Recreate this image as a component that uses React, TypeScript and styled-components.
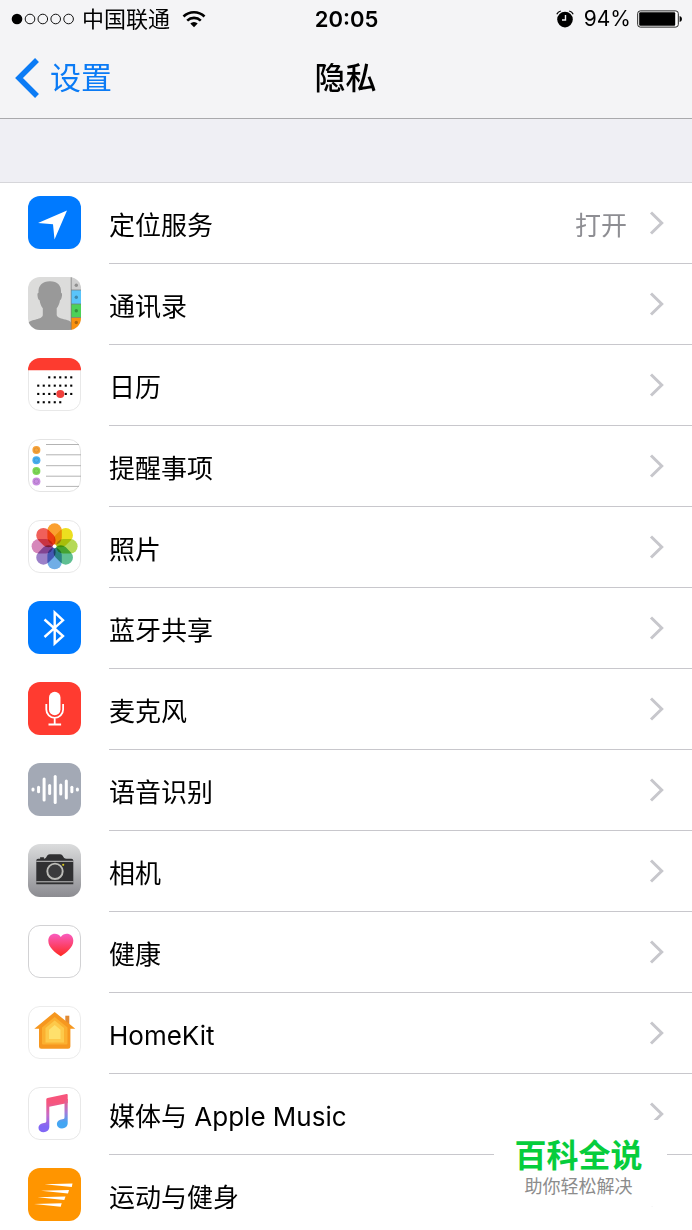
import React from 'react';
import styled, { createGlobalStyle } from 'styled-components';

const GlobalStyle = createGlobalStyle`
  * { box-sizing: border-box; }
  body {
    margin: 0;
    background: #fff;
    color: #000;
    font-family: Inter, "Noto Sans CJK SC", sans-serif;
  }
  a { color: inherit; text-decoration: none; }
  svg { display: block; flex: none; }
`;

const Screen = styled.div`
  position: relative;
  height: 100vh;
  overflow: hidden;
  display: flex;
  flex-direction: column;
`;

const Header = styled.header`
  flex: none;
  background: #f4f4f6;
  border-bottom: 1px solid #a9a9ac;
`;

const StatusBar = styled.div`
  display: grid;
  grid-template-columns: 1fr auto 1fr;
  align-items: center;
  height: 38px;
  padding: 0 10px 0 11px;
  font-size: 22px;
  line-height: 38px;
`;

const StatusGroup = styled.div<{ $end?: boolean }>`
  display: flex;
  align-items: center;
  justify-content: ${(p) => (p.$end ? 'flex-end' : 'flex-start')};
`;

const Carrier = styled.span`
  margin: 0 12px 0 7px;
`;

const Time = styled.time`
  font-weight: 600;
`;

const BatteryLevel = styled.span`
  margin: 0 6px 0 10px;
  font-size: 21px;
`;

const NavBar = styled.nav`
  display: grid;
  grid-template-columns: 1fr auto 1fr;
  align-items: center;
  height: 80px;
  padding: 0 15px 0 14px;
`;

const BackLink = styled.a`
  display: flex;
  align-items: center;
  gap: 10px;
  color: #0b7bf5;
  font-size: 31px;
  line-height: 40px;
`;

const Title = styled.h1`
  margin: 0;
  font-size: 31px;
  font-weight: 500;
  line-height: 40px;
`;

const SectionGap = styled.div`
  flex: none;
  height: 64px;
  background: #efeff4;
  border-bottom: 1px solid #d6d6da;
`;

const List = styled.ul`
  margin: 0;
  padding: 0;
  list-style: none;
`;

const Row = styled.a`
  display: flex;
  align-items: flex-start;
  gap: 28px;
  padding-left: 28px;
`;

const IconSlot = styled.span`
  padding-top: 13px;
`;

const RowBody = styled.span`
  flex: 1;
  display: flex;
  align-items: center;
  height: 81px;
  padding-right: 27px;
  border-bottom: 1px solid #c8c7cc;
  font-size: 26px;
  line-height: 36px;
`;

const Label = styled.span`
  flex: 1;
  padding-top: 6px;
`;

const Value = styled.span`
  padding-top: 6px;
  margin-right: 22px;
  color: #8e8e93;
`;

const Watermark = styled.aside`
  position: absolute;
  right: 25px;
  bottom: 24px;
  width: 173px;
  height: 86px;
  padding: 17px 4px 0 0;
  background: #fff;
  text-align: center;
`;

const Brand = styled.div`
  color: #06cd3c;
  font-size: 32px;
  font-weight: 700;
  line-height: 38px;
`;

const Slogan = styled.div`
  color: #8c8c8c;
  font-size: 18px;
  line-height: 24px;
`;

const Chevron = () => (
  <svg width="16" height="26" viewBox="0 0 16 26" fill="none" stroke="#c7c7cc" strokeWidth="3">
    <path d="M2 2.5 12.7 13 2 23.5" />
  </svg>
);

const Tile = ({ fill = '#fff', edge, children }: { fill?: string; edge?: string; children: React.ReactNode }) => (
  <svg width="53" height="53" viewBox="0 0 53 53" aria-hidden="true">
    <rect width="53" height="53" rx="12" fill={fill} />
    {edge && <rect x=".5" y=".5" width="52" height="52" rx="11.5" fill="none" stroke={edge} />}
    {children}
  </svg>
);

const LocationIcon = () => (
  <Tile fill="#007aff"><path d="M39 14.5 10 27l15 1.3 1.5 15.2z" fill="#fff" /></Tile>
);

const ContactsIcon = () => (
  <Tile fill="#dcdcdb">
    <clipPath id="contacts"><rect width="53" height="53" rx="12" /></clipPath>
    <g clipPath="url(#contacts)">
      <path d="M22 4.3c7.6 0 11.5 4.200 11 11.500.8 0 1.200 1 1 2.700-.3 2.500-1 4.300-2 4.800-.5 3.500-1.700 6-3.300 8v6.500c0 5 14 4 14.300 8V53H0v-7c3-4 14.800-3 14.800-8.200v-6.500c-1.600-2-2.700-4.500-3.200-8-1.200-.5-1.900-2.300-2.100-4.800-.2-1.700.2-2.700 1-2.700C10 8.500 14.500 4.300 22 4.300Z" fill="#999" />
      <path d="M43 0h10v13H43z" fill="#cfcfcf" />
      <path d="M43 13h10v14H43z" fill="#5ac4fa" />
      <path d="M43 27h10v13.500H43z" fill="#4cd158" />
      <path d="M43 40.500h10V53H43z" fill="#f9910f" />
      <path d="M43.200 0v53M43 13h10M43 27h10M43 40.500h10" stroke="#777" strokeWidth=".7" />
      <g fill="#000" opacity=".3">
        <circle cx="48.300" cy="8.300" r="1.700" /><circle cx="48.300" cy="20.300" r="1.700" />
        <circle cx="48.300" cy="33.800" r="1.700" /><circle cx="48.300" cy="45.500" r="1.700" />
      </g>
    </g>
  </Tile>
);

const calendarRows = [[2, 6], [0, 6], [0, 6], [0, 4]];

const CalendarIcon = () => (
  <Tile edge="#e8e8e8">
    {calendarRows.map(([from, to], r) =>
      Array.from({ length: to - from + 1 }, (_, i) => (
        <rect key={`${r}-${i}`} x={9.2 + (from + i) * 5.5} y={18.300 + r * 8.3} width="2.100" height="2.100" fill="#000" />
      )),
    )}
    <circle cx="32.300" cy="36" r="4" fill="#f0403c" />
    <path d="M0 12.300V12A12 12 0 0 1 12 0h29a12 12 0 0 1 12 12v.3z" fill="#fd3b2f" />
  </Tile>
);

const reminderDots: [string, number][] = [['#f7a239', 11], ['#49aff0', 21.2], ['#7ed957', 32], ['#c88ce0', 42.4]];

const RemindersIcon = () => (
  <Tile edge="#e4e4e4">
    {reminderDots.map(([c, y]) => (
      <g key={c}>
        <circle cx="8.400" cy={y} r="4" fill={c} />
        <circle cx="8.400" cy={y} r="2.200" fill="none" stroke="#000" strokeOpacity=".12" strokeWidth=".8" />
      </g>
    ))}
    <path d="M18 5.500h33M18 15.800h35M18 26.700h35M18 37.200h35M18 47.400h33" stroke="#b3b3b3" />
  </Tile>
);

const petals = ['#fba02f', '#ecdf1f', '#b5d956', '#5fbf92', '#70aee6', '#9b80c8', '#d687ba', '#f0605a'];

const PhotosIcon = () => (
  <Tile edge="#e8e8e8">
    <g transform="translate(26.600 26.300)" style={{ isolation: 'isolate' }}>
      {petals.map((c, i) => (
        <rect key={c} x="-7.200" y="-23" width="14.400" height="21.500" rx="7.200" fill={c}
          transform={`rotate(${i * 45})`} style={{ mixBlendMode: 'multiply' }} />
      ))}
      <circle r="1.800" fill="#fff" />
    </g>
  </Tile>
);

const BluetoothIcon = () => (
  <Tile fill="#007aff">
    <path d="M16.500 18.500 35 35 26.700 42.500v-31L35 19.300 16.500 36" fill="none" stroke="#fff" strokeWidth="2.400" />
  </Tile>
);

const MicrophoneIcon = () => (
  <Tile fill="#ff3b30">
    <rect x="21" y="9.800" width="11.500" height="23.500" rx="5.750" fill="#fff" />
    <path d="M18.300 22v5.500a8.400 8.400 0 0 0 16.800 0V22M26.700 36v6.300M20.500 42.500h12.600" fill="none" stroke="#fff" strokeWidth="1.800" />
  </Tile>
);

const waveBars = [4, 7.5, 24, 11, 29, 12, 20, 7.5, 4];

const SpeechIcon = () => (
  <Tile fill="#a3a9b5">
    {waveBars.map((h, i) => (
      <rect key={i} x={3.5 + i * 5.55} y={26.600 - h / 2} width="3" height={h} rx="1.500" fill="#fff" />
    ))}
  </Tile>
);

const CameraIcon = () => (
  <Tile fill="url(#camera)">
    <linearGradient id="camera" x2="0" y2="1">
      <stop stopColor="#dbdcdd" /><stop offset="1" stopColor="#8c8c91" />
    </linearGradient>
    <path d="M8.300 16.500q0-1.800 1.800-1.800h2v-1.400h3.800v1.400c3.500 0 2-4.500 6-4.500h10c4 0 2.500 4.500 6.500 4.500h5q1.900 0 1.900 1.800v23.700h-37z" fill="#303032" />
    <path d="M8.300 17.300h37M8.300 37.800h37" stroke="#d4d4d4" strokeWidth=".9" />
    <circle cx="27" cy="27.300" r="7.700" fill="#3b3b3d" stroke="#bcbcb8" strokeWidth="1.900" />
    <circle cx="35.200" cy="20.800" r="1.100" fill="#d5c51d" />
  </Tile>
);

const HealthIcon = () => (
  <Tile edge="#d2d2d4">
    <linearGradient id="heart" x2="0" y2="1">
      <stop stopColor="#f95cc0" /><stop offset="1" stopColor="#ff2920" />
    </linearGradient>
    <path d="M32.800 31.300C27 27.300 20.300 22.500 20.300 15.700c0-7.500 8.800-9.300 12.500-3.700 3.700-5.600 12.500-3.800 12.500 3.700 0 6.800-6.700 11.600-12.500 15.600Z" fill="url(#heart)" />
  </Tile>
);

const HomeIcon = () => (
  <Tile edge="#ececec">
    <path d="M37.300 9.700h4v9h-4z" fill="#e08a35" />
    <path d="M26.700 6 47.300 22.700H42.400V40.500q0 2.300-2.300 2.300H13.300Q11 42.800 11 40.500V22.700H6.300z" fill="#f6971f" />
    <path d="M26.700 11 39.500 21.500V37.500q0 1-1 1H15q-1 0-1-1V21.500z" fill="#fbb030" />
    <path d="M26.700 14.500 36 22V36.500H17.500V22z" fill="#fdc94a" />
    <path d="M26.700 19 32.500 23.700V33H21V23.700z" fill="#fee06c" />
  </Tile>
);

const MusicIcon = () => (
  <Tile edge="#e8e8e8">
    <linearGradient id="note" gradientUnits="userSpaceOnUse" x1="28" y1="8" x2="28" y2="45">
      <stop offset=".2" stopColor="#f7557c" /><stop offset=".55" stopColor="#c56bc9" /><stop offset=".85" stopColor="#8167f5" />
    </linearGradient>
    <linearGradient id="note-end" gradientUnits="userSpaceOnUse" x1="38" y1="12" x2="38" y2="38">
      <stop stopColor="#f7557c" /><stop offset=".5" stopColor="#a67ad8" /><stop offset=".9" stopColor="#44a6f3" />
    </linearGradient>
    <path d="M18.300 12.300q0-1.200 1.200-1.400L38.500 7q1.200-.2 1.200 1v8L21.300 19.800V40c0 3-2.500 5.200-5.700 5.200-3 0-5.100-1.700-5.100-4.200 0-3 2.300-4.500 5.500-5 1.800-.3 2.300-.7 2.300-2.300z" fill="url(#note)" />
    <path d="M36.500 12h3.200v24.300c0 3-2.500 5.200-5.700 5.200-3 0-5.100-1.700-5.100-4.200 0-3 2.300-4.500 5.400-5 1.800-.3 2.200-.7 2.200-2.300z" fill="url(#note-end)" />
  </Tile>
);

const MotionIcon = () => (
  <Tile fill="#ff9500">
    <path d="M16.500 16.300 44.500 15.400 43.800 18.900zM13 22.700 41 21.900 40 25.400zM9.500 29.300 37.500 28.500 36.300 32zM6 36 33.700 35.200 32.700 38.700z" fill="#fff" />
  </Tile>
);

const items: { label: string; icon: React.FC; value?: string }[] = [
  { label: '定位服务', icon: LocationIcon, value: '打开' },
  { label: '通讯录', icon: ContactsIcon },
  { label: '日历', icon: CalendarIcon },
  { label: '提醒事项', icon: RemindersIcon },
  { label: '照片', icon: PhotosIcon },
  { label: '蓝牙共享', icon: BluetoothIcon },
  { label: '麦克风', icon: MicrophoneIcon },
  { label: '语音识别', icon: SpeechIcon },
  { label: '相机', icon: CameraIcon },
  { label: '健康', icon: HealthIcon },
  { label: 'HomeKit', icon: HomeIcon },
  { label: '媒体与 Apple Music', icon: MusicIcon },
  { label: '运动与健身', icon: MotionIcon },
];

const Signal = () => (
  <svg width="64" height="12" viewBox="0 0 64 12" fill="none" stroke="#111">
    <circle cx="6" cy="6" r="5.300" fill="#000" stroke="none" />
    {[19, 31.8, 44.7, 57.6].map((x) => <circle key={x} cx={x} cy="6" r="4.800" />)}
  </svg>
);

const Wifi = () => (
  <svg width="24" height="18" viewBox="0 0 24 18" fill="none" stroke="#000" strokeWidth="2.600">
    <path d="M1.500 6.500a15.200 15.200 0 0 1 21 0M5.200 10.600a9.800 9.800 0 0 1 13.600 0" />
    <path d="M12 17.300 8.300 13.600a5.300 5.300 0 0 1 7.400 0z" fill="#000" stroke="none" />
  </svg>
);

const Alarm = () => (
  <svg width="18" height="18" viewBox="0 0 18 18" fill="none">
    <circle cx="9" cy="9.600" r="7.800" fill="#000" />
    <path d="M9.500 5v5H6" stroke="#f4f4f6" strokeWidth="1.400" />
    <path d="M.8 4.200Q2 1.800 4.800 1M17.200 4.200Q16 1.800 13.200 1" stroke="#000" strokeWidth="1.300" />
  </svg>
);

const Battery = () => (
  <svg width="45" height="18" viewBox="0 0 45 18">
    <rect x=".7" y=".9" width="40.600" height="16.200" rx="2.600" fill="#fff" stroke="#222" />
    <rect x="2.200" y="2.300" width="36" height="13.400" rx="1" fill="#000" />
    <path d="M42.600 6q2.400.5 2.400 3t-2.400 3z" fill="#000" />
  </svg>
);

export default function App() {
  return (
    <Screen>
      <GlobalStyle />
      <Header>
        <StatusBar>
          <StatusGroup>
            <Signal />
            <Carrier>中国联通</Carrier>
            <Wifi />
          </StatusGroup>
          <Time>20:05</Time>
          <StatusGroup $end>
            <Alarm />
            <BatteryLevel>94%</BatteryLevel>
            <Battery />
          </StatusGroup>
        </StatusBar>
        <NavBar>
          <BackLink href="#settings">
            <svg width="26" height="40" viewBox="0 0 26 40" fill="none" stroke="currentColor" strokeWidth="5.500">
              <path d="M23 2 5 20 23 38" />
            </svg>
            设置
          </BackLink>
          <Title>隐私</Title>
        </NavBar>
      </Header>
      <SectionGap />
      <List>
        {items.map(({ label, icon: Icon, value }) => (
          <li key={label}>
            <Row href={`#${label}`}>
              <IconSlot><Icon /></IconSlot>
              <RowBody>
                <Label>{label}</Label>
                {value && <Value>{value}</Value>}
                <Chevron />
              </RowBody>
            </Row>
          </li>
        ))}
      </List>
      <Watermark>
        <Brand>百科全说</Brand>
        <Slogan>助你轻松解决</Slogan>
      </Watermark>
    </Screen>
  );
}
